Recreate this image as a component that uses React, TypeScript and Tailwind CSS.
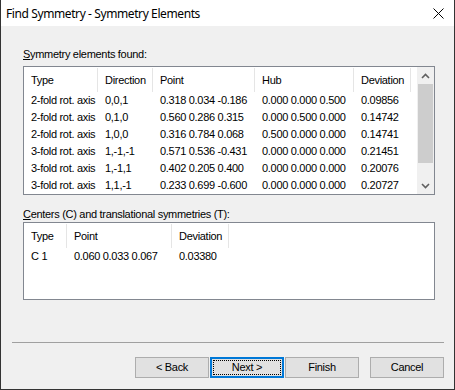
import React from 'react';

const elements = [
  ['2-fold rot. axis', '0,0,1', '0.318 0.034 -0.186', '0.000 0.000 0.500', '0.09856'],
  ['2-fold rot. axis', '0,1,0', '0.560 0.286 0.315', '0.000 0.500 0.000', '0.14742'],
  ['2-fold rot. axis', '1,0,0', '0.316 0.784 0.068', '0.500 0.000 0.000', '0.14741'],
  ['3-fold rot. axis', '1,-1,-1', '0.571 0.536 -0.431', '0.000 0.000 0.000', '0.21451'],
  ['3-fold rot. axis', '1,-1,1', '0.402 0.205 0.400', '0.000 0.000 0.000', '0.20076'],
  ['3-fold rot. axis', '1,1,-1', '0.233 0.699 -0.600', '0.000 0.000 0.000', '0.20727'],
];

const centers = [['C 1', '0.060 0.033 0.067', '0.03380']];

const cols1 = ['w-[74px]', 'w-[55px]', 'w-[102px]', 'w-[99px]', 'w-[57px]'];
const cols2 = ['w-[43px]', 'w-[105px]', 'w-[57px]'];

function Header({ labels, widths }: { labels: string[]; widths: string[] }) {
  return (
    <div className="flex h-[25px] shrink-0">
      {labels.map((l, i) => (
        <div key={l} className={`${widths[i]} shrink-0 pt-px`}>
          <div className="h-[24px] border-r border-[#e5e5e5] pl-[7px] flex items-center whitespace-nowrap">{l}</div>
        </div>
      ))}
    </div>
  );
}

function Rows({ rows, widths }: { rows: string[][]; widths: string[] }) {
  return (
    <>
      {rows.map((r, ri) => (
        <div key={ri} className="flex h-[17px] shrink-0 items-center">
          {r.map((c, ci) => (
            <div key={ci} className={`${widths[ci]} shrink-0 pl-[7px] whitespace-nowrap`}>
              {c}
            </div>
          ))}
        </div>
      ))}
    </>
  );
}

function Chevron({ up }: { up?: boolean }) {
  return (
    <svg width="9" height="6" viewBox="0 0 9 6" className="block">
      <path
        d={up ? 'M1 5 L4.5 1.5 L8 5' : 'M1 1 L4.5 4.5 L8 1'}
        fill="none"
        stroke="#606060"
        strokeWidth="1.6"
      />
    </svg>
  );
}

function Button({ label, focused }: { label: string; focused?: boolean }) {
  if (focused) {
    return (
      <div className="w-[74px] h-[21px] border-2 border-[#0078d7] bg-[#e1e1e1] p-px">
        <div className="h-full border border-dotted border-black flex items-center justify-center">{label}</div>
      </div>
    );
  }
  return (
    <div className="w-[74px] h-[21px] border border-[#adadad] bg-[#e1e1e1] flex items-center justify-center">
      {label}
    </div>
  );
}

export default function App() {
  return (
    <div
      className="w-[455px] h-[390px] flex flex-col border-x border-b border-[#333333] bg-[#f0f0f0] text-black text-[11px] leading-[13px] tracking-[-0.3px]"
      style={{ fontFamily: '"Liberation Sans", Arial, sans-serif' }}
    >
      {/* Title bar */}
      <div className="h-[26px] shrink-0 bg-white flex items-center justify-between pl-[5px] pr-[10px]">
        <span className="text-[12px] tracking-[-0.4px]" style={{ fontFamily: '"Noto Sans", "Open Sans", sans-serif' }}>
          Find Symmetry - Symmetry Elements
        </span>
        <svg width="11" height="11" viewBox="0 0 11 11">
          <path d="M0.5 0.5 L10.5 10.5 M10.5 0.5 L0.5 10.5" stroke="#000" strokeWidth="1" />
        </svg>
      </div>

      <div className="flex flex-col pl-[22px] pt-[22px]">
        <div>
          <span className="underline">S</span>ymmetry elements found:
        </div>
        <div className="mt-[5px] w-[412px] h-[129px] border border-[#828790] bg-white flex">
          <div className="flex-1 flex flex-col overflow-hidden">
            <Header labels={['Type', 'Direction', 'Point', 'Hub', 'Deviation']} widths={cols1} />
            <Rows rows={elements} widths={cols1} />
          </div>
          <div className="w-[17px] shrink-0 bg-[#f0f0f0] flex flex-col">
            <div className="h-[17px] flex items-center justify-center">
              <Chevron up />
            </div>
            <div className="flex-1 flex flex-col">
              <div className="h-[79px] mx-px bg-[#cdcdcd]" />
            </div>
            <div className="h-[17px] flex items-center justify-center">
              <Chevron />
            </div>
          </div>
        </div>

        <div className="mt-[13px]">
          <span className="underline">C</span>enters (C) and translational symmetries (T):
        </div>
        <div className="mt-px w-[412px] h-[78px] border border-[#828790] bg-white flex flex-col">
          <Header labels={['Type', 'Point', 'Deviation']} widths={cols2} />
          <Rows rows={centers} widths={cols2} />
        </div>
      </div>

      <div className="ml-[11px] mt-[42px] w-[432px] h-px bg-[#a0a0a0]" />

      <div className="flex pl-[134px] mt-[14px]">
        <Button label="< Back" />
        <div className="ml-[1px]">
          <Button label="Next >" focused />
        </div>
        <div className="ml-[1px]">
          <Button label="Finish" />
        </div>
        <div className="ml-[11px]">
          <Button label="Cancel" />
        </div>
      </div>
    </div>
  );
}
